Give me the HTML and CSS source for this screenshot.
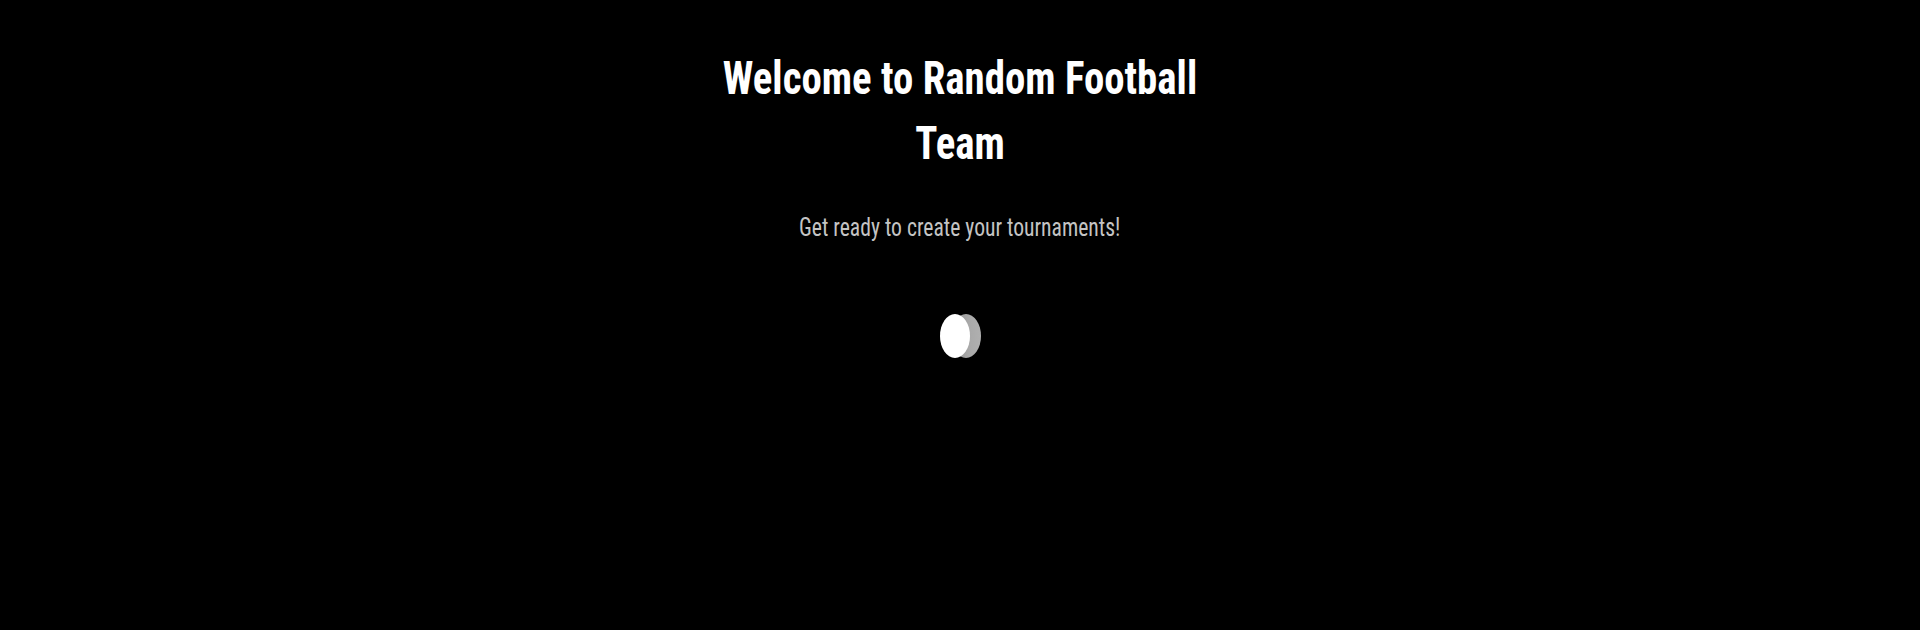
FILE: index.html
```html
<!DOCTYPE html>
<html lang="en">
<head>
<meta charset="utf-8">
<title>Random Football Team</title>
<link rel="stylesheet" href="styles.css">
</head>
<body>
<main class="welcome">
  <h1 class="title">Welcome to Random Football Team</h1>
  <p class="subtitle">Get ready to create your tournaments!</p>
  <div class="loader">
    <span class="coin coin-back"></span>
    <span class="coin coin-front"></span>
  </div>
</main>
</body>
</html>
```

FILE: styles.css
```css
html, body {
  margin: 0;
  padding: 0;
  background: #000;
  height: 100%;
}
body {
  font-family: "Roboto Condensed", Roboto, "Liberation Sans", sans-serif;
  color: #fff;
}
.welcome {
  display: flex;
  flex-direction: column;
  align-items: center;
  padding-top: 46px;
}
.title {
  margin: 0;
  width: 560px;
  text-align: center;
  font-size: 46px;
  font-weight: 700;
  line-height: 65px;
  letter-spacing: 0;
  transform: scaleX(0.888);
}
.subtitle {
  margin: 37px 0 0;
  font-size: 25px;
  line-height: 30px;
  color: #c4c4c4;
  font-weight: 400;
  transform: scaleX(0.865);
}
.loader {
  position: relative;
  margin-top: 71px;
  width: 41px;
  height: 44px;
}
.coin {
  position: absolute;
  top: 0;
  width: 30px;
  height: 44px;
  border-radius: 50%;
}
.coin-back {
  left: 11px;
  background: linear-gradient(90deg, #8e8e8e 0%, #a9a9a9 60%, #b0b0b0 100%);
}
.coin-front {
  left: 0;
  background: #fff;
}
```
